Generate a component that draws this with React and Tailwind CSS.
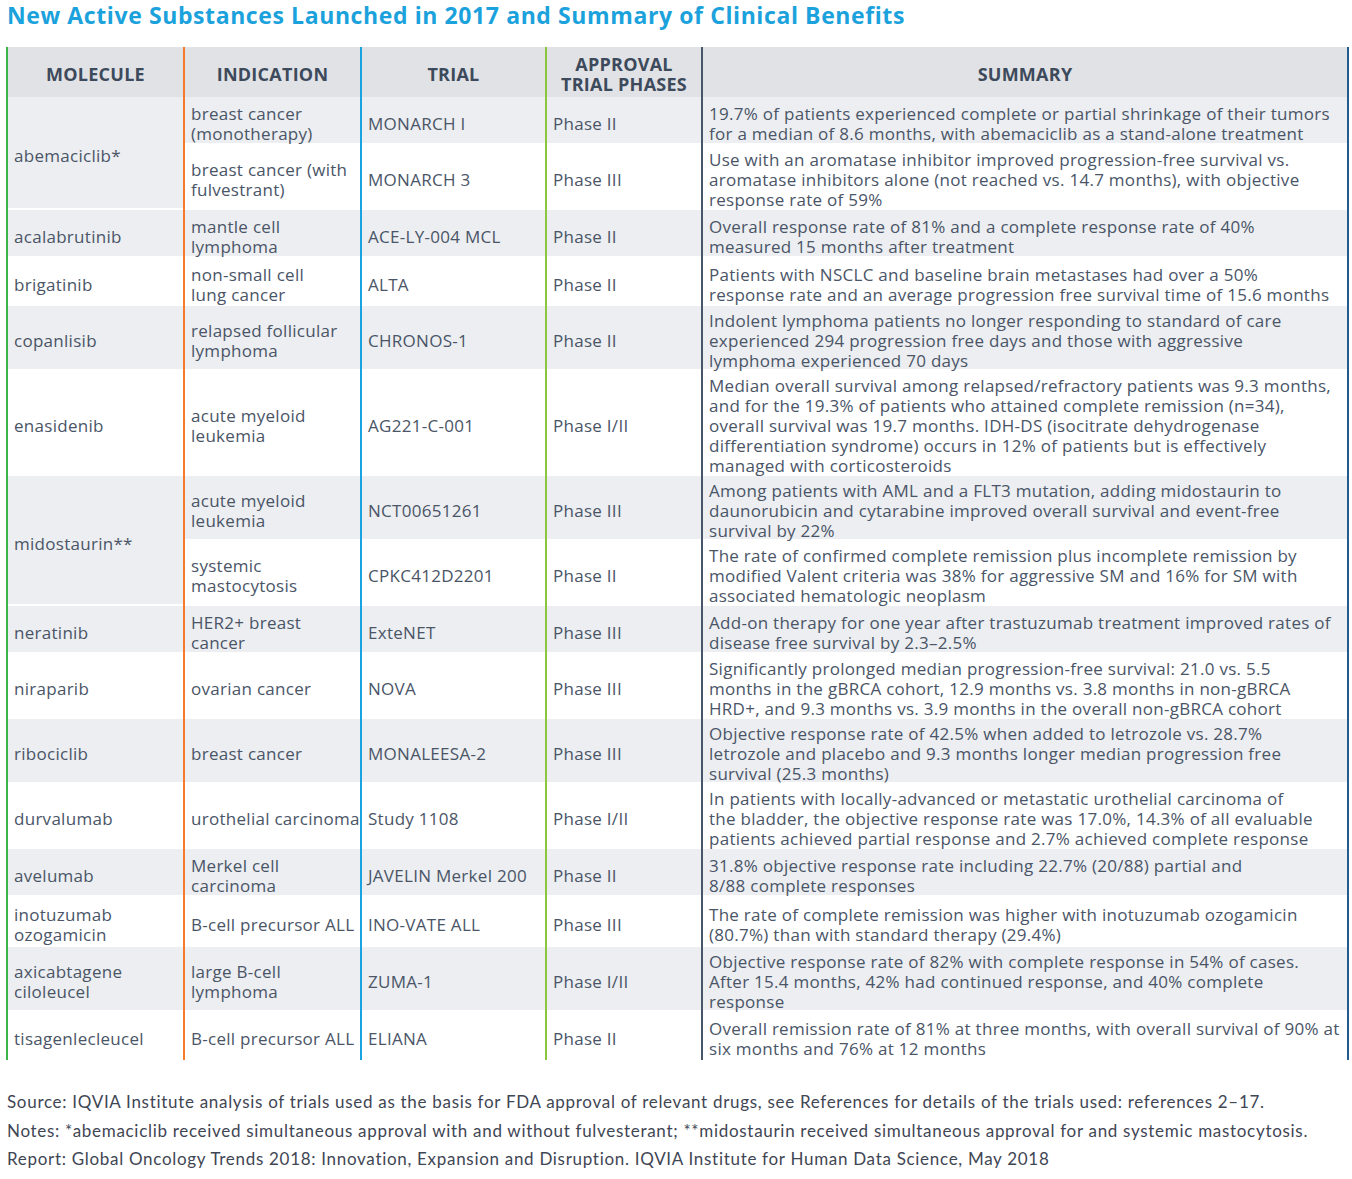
import React from "react";

const rows = [
  {
    mol: ["abemaciclib*"],
    subs: [
      {
        ind: ["breast cancer", "(monotherapy)"],
        trial: "MONARCH I",
        phase: "Phase II",
        sum: [
          "19.7% of patients experienced complete or partial shrinkage of their tumors",
          "for a median of 8.6 months, with abemaciclib as a stand-alone treatment",
        ],
      },
      {
        ind: ["breast cancer (with", "fulvestrant)"],
        trial: "MONARCH 3",
        phase: "Phase III",
        sum: [
          "Use with an aromatase inhibitor improved progression-free survival vs.",
          "aromatase inhibitors alone (not reached vs. 14.7 months), with objective",
          "response rate of 59%",
        ],
      },
    ],
  },
  {
    mol: ["acalabrutinib"],
    subs: [
      {
        ind: ["mantle cell", "lymphoma"],
        trial: "ACE-LY-004 MCL",
        phase: "Phase II",
        sum: [
          "Overall response rate of 81% and a complete response rate of 40%",
          "measured 15 months after treatment",
        ],
      },
    ],
  },
  {
    mol: ["brigatinib"],
    subs: [
      {
        ind: ["non-small cell", "lung cancer"],
        trial: "ALTA",
        phase: "Phase II",
        sum: [
          "Patients with NSCLC and baseline brain metastases had over a 50%",
          "response rate and an average progression free survival time of 15.6 months",
        ],
      },
    ],
  },
  {
    mol: ["copanlisib"],
    subs: [
      {
        ind: ["relapsed follicular", "lymphoma"],
        trial: "CHRONOS-1",
        phase: "Phase II",
        sum: [
          "Indolent lymphoma patients no longer responding to standard of care",
          "experienced 294 progression free days and those with aggressive",
          "lymphoma experienced 70 days",
        ],
      },
    ],
  },
  {
    mol: ["enasidenib"],
    subs: [
      {
        ind: ["acute myeloid", "leukemia"],
        trial: "AG221-C-001",
        phase: "Phase I/II",
        sum: [
          "Median overall survival among relapsed/refractory patients was 9.3 months,",
          "and for the 19.3% of patients who attained complete remission (n=34),",
          "overall survival was 19.7 months. IDH-DS (isocitrate dehydrogenase",
          "differentiation syndrome) occurs in 12% of patients but is effectively",
          "managed with corticosteroids",
        ],
      },
    ],
  },
  {
    mol: ["midostaurin**"],
    subs: [
      {
        ind: ["acute myeloid", "leukemia"],
        trial: "NCT00651261",
        phase: "Phase III",
        sum: [
          "Among patients with AML and a FLT3 mutation, adding midostaurin to",
          "daunorubicin and cytarabine improved overall survival and event-free",
          "survival by 22%",
        ],
      },
      {
        ind: ["systemic", "mastocytosis"],
        trial: "CPKC412D2201",
        phase: "Phase II",
        sum: [
          "The rate of confirmed complete remission plus incomplete remission by",
          "modified Valent criteria was 38% for aggressive SM and 16% for SM with",
          "associated hematologic neoplasm",
        ],
      },
    ],
  },
  {
    mol: ["neratinib"],
    subs: [
      {
        ind: ["HER2+ breast", "cancer"],
        trial: "ExteNET",
        phase: "Phase III",
        sum: [
          "Add-on therapy for one year after trastuzumab treatment improved rates of",
          "disease free survival by 2.3–2.5%",
        ],
      },
    ],
  },
  {
    mol: ["niraparib"],
    subs: [
      {
        ind: ["ovarian cancer"],
        trial: "NOVA",
        phase: "Phase III",
        sum: [
          "Significantly prolonged median progression-free survival: 21.0 vs. 5.5",
          "months in the gBRCA cohort, 12.9 months vs. 3.8 months in non-gBRCA",
          "HRD+, and 9.3 months vs. 3.9 months in the overall non-gBRCA cohort",
        ],
      },
    ],
  },
  {
    mol: ["ribociclib"],
    subs: [
      {
        ind: ["breast cancer"],
        trial: "MONALEESA-2",
        phase: "Phase III",
        sum: [
          "Objective response rate of 42.5% when added to letrozole vs. 28.7%",
          "letrozole and placebo and 9.3 months longer median progression free",
          "survival (25.3 months)",
        ],
      },
    ],
  },
  {
    mol: ["durvalumab"],
    subs: [
      {
        ind: ["urothelial carcinoma"],
        trial: "Study 1108",
        phase: "Phase I/II",
        sum: [
          "In patients with locally-advanced or metastatic urothelial carcinoma of",
          "the bladder, the objective response rate was 17.0%, 14.3% of all evaluable",
          "patients achieved partial response and 2.7% achieved complete response",
        ],
      },
    ],
  },
  {
    mol: ["avelumab"],
    subs: [
      {
        ind: ["Merkel cell", "carcinoma"],
        trial: "JAVELIN Merkel 200",
        phase: "Phase II",
        sum: [
          "31.8% objective response rate including 22.7% (20/88) partial and",
          "8/88 complete responses",
        ],
      },
    ],
  },
  {
    mol: ["inotuzumab", "ozogamicin"],
    subs: [
      {
        ind: ["B-cell precursor ALL"],
        trial: "INO-VATE ALL",
        phase: "Phase III",
        sum: [
          "The rate of complete remission was higher with inotuzumab ozogamicin",
          "(80.7%) than with standard therapy (29.4%)",
        ],
      },
    ],
  },
  {
    mol: ["axicabtagene", "ciloleucel"],
    subs: [
      {
        ind: ["large B-cell", "lymphoma"],
        trial: "ZUMA-1",
        phase: "Phase I/II",
        sum: [
          "Objective response rate of 82% with complete response in 54% of cases.",
          "After 15.4 months, 42% had continued response, and 40% complete",
          "response",
        ],
      },
    ],
  },
  {
    mol: ["tisagenlecleucel"],
    subs: [
      {
        ind: ["B-cell precursor ALL"],
        trial: "ELIANA",
        phase: "Phase II",
        sum: [
          "Overall remission rate of 81% at three months, with overall survival of 90% at",
          "six months and 76% at 12 months",
        ],
      },
    ],
  },
];

const Lines = ({ lines }) =>
  lines.map((line, i) => (
    <div key={i} className="whitespace-nowrap">
      {line}
    </div>
  ));

const cell = "px-[6px] pt-[5px] pb-0 align-middle text-left";

const App = () => {
  // flatten sub-rows so the gray / white shading alternates per line of the table
  let n = 0;
  const body = [];
  rows.forEach((r, ri) => {
    const isLastGroup = ri === rows.length - 1;
    r.subs.forEach((s, si) => {
      const gray = n % 2 === 0;
      const bg = gray ? "bg-[#eceef1]" : "bg-white";
      const sep = isLastGroup ? "" : "shadow-[inset_0_-2px_0_#ffffff]";
      const h = r.mol.length > 1 ? "h-[50px]" : "h-[48px]";
      n++;
      body.push(
        <tr key={`${ri}-${si}`} className={h}>
          {si === 0 && (
            <td
              rowSpan={r.subs.length}
              className={`${cell} ${bg} ${sep} border-l-2 border-[#3bb54a]`}
            >
              <Lines lines={r.mol} />
            </td>
          )}
          <td className={`${cell} ${bg} ${sep} border-l-2 border-[#f47b2b]`}>
            <Lines lines={s.ind} />
          </td>
          <td className={`${cell} ${bg} ${sep} border-l-2 border-[#1aa3e1]`}>
            <div className="whitespace-nowrap">{s.trial}</div>
          </td>
          <td className={`${cell} ${bg} ${sep} border-l-2 border-[#8cc63f]`}>
            {s.phase}
          </td>
          <td
            className={`${cell} ${bg} ${sep} border-l-2 border-r-2 border-l-[#48566a] border-r-[#245b8c]`}
          >
            <Lines lines={s.sum} />
          </td>
        </tr>
      );
    });
  });

  return (
    <div
      className="w-[1352px] bg-white text-[#4a5567]"
      style={{ fontFamily: "'Open Sans', Lato, sans-serif" }}
    >
      <h1 className="pl-[7px] text-[23px] leading-[30px] font-bold tracking-[0.6px] text-[#1ba2dc]">
        New Active Substances Launched in 2017 and Summary of Clinical Benefits
      </h1>

      <table className="ml-[6px] mt-[17px] w-[1343px] table-fixed border-separate border-spacing-0 text-[17px] leading-[20px] tracking-[0.28px]">
        <colgroup>
          <col className="w-[177px]" />
          <col className="w-[177px]" />
          <col className="w-[185px]" />
          <col className="w-[156px]" />
          <col className="w-[648px]" />
        </colgroup>
        <thead>
          <tr className="bg-[#e1e2e5] text-[#3d4a5c] text-[18px] font-bold uppercase tracking-[0.25px]">
            <th className="h-[50px] pt-[4px] border-l-2 border-[#3bb54a] px-1 text-center align-middle">
              Molecule
            </th>
            <th className="pt-[4px] border-l-2 border-[#f47b2b] px-1 text-center align-middle">
              Indication
            </th>
            <th className="pt-[4px] border-l-2 border-[#1aa3e1] px-1 text-center align-middle">
              Trial
            </th>
            <th className="pt-[4px] border-l-2 border-[#8cc63f] px-1 text-center align-middle">
              Approval
              <br />
              Trial Phases
            </th>
            <th className="pt-[4px] border-l-2 border-r-2 border-l-[#48566a] border-r-[#245b8c] px-1 text-center align-middle">
              Summary
            </th>
          </tr>
        </thead>
        <tbody>{body}</tbody>
      </table>

      <div
        className="mt-[28px] pl-[7px] text-[17px] leading-[28.5px] tracking-[0.7px] text-[#3f4654]"
        style={{ fontFamily: "Lato, sans-serif" }}
      >
        <p>
          Source: IQVIA Institute analysis of trials used as the basis for FDA approval of relevant
          drugs, see References for details of the trials used: references 2–17.
        </p>
        <p>
          Notes: *abemaciclib received simultaneous approval with and without fulvesterant;
          **midostaurin received simultaneous approval for and systemic mastocytosis.
        </p>
        <p>
          Report: Global Oncology Trends 2018: Innovation, Expansion and Disruption. IQVIA
          Institute for Human Data Science, May 2018
        </p>
      </div>
    </div>
  );
};

export default App;
